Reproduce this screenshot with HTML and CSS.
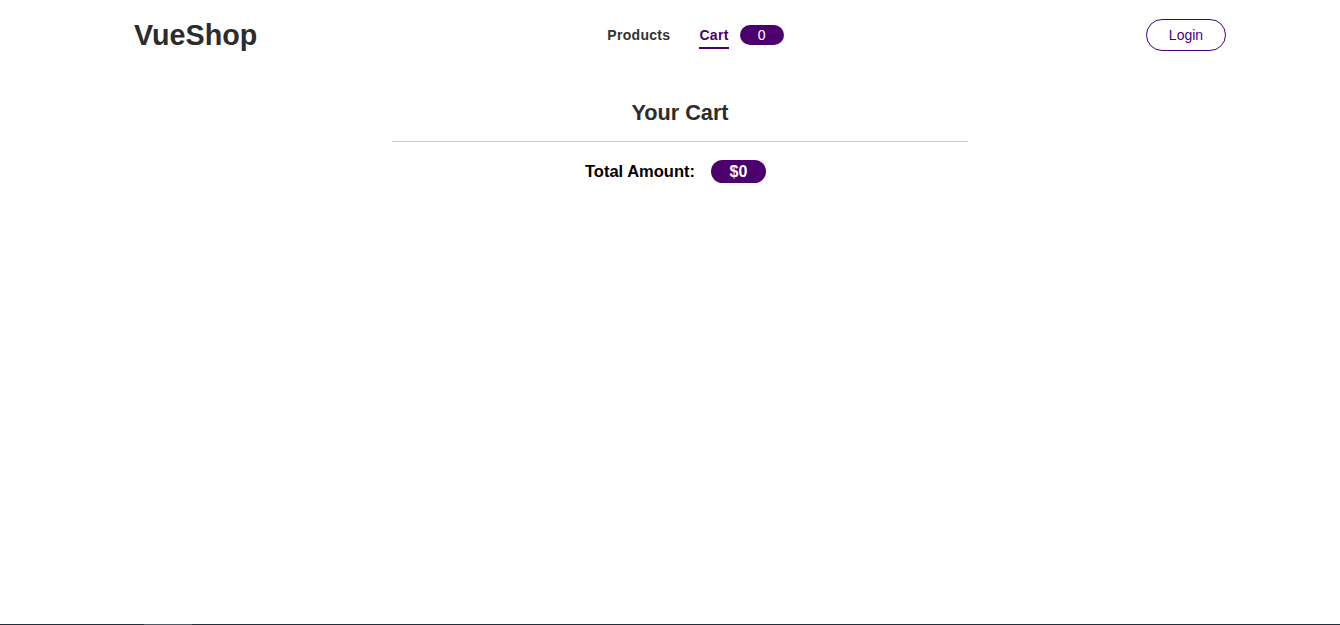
FILE: index.html
```html
<!DOCTYPE html>
<html lang="en">
<head>
<meta charset="utf-8">
<title>VueShop</title>
<link rel="stylesheet" href="styles.css">
</head>
<body>
<div class="page">
  <header class="header">
    <div class="logo">VueShop</div>
    <nav class="nav">
      <a class="nav-link">Products</a>
      <a class="nav-link active">Cart</a>
      <span class="badge">0</span>
    </nav>
    <button class="login">Login</button>
  </header>
  <main class="cart">
    <h2 class="cart-title">Your Cart</h2>
    <hr class="divider">
    <div class="total">
      <span class="total-label">Total Amount:</span>
      <span class="total-badge">$0</span>
    </div>
  </main>
  <footer class="footer"><span class="footer-mark"></span></footer>
</div>
</body>
</html>
```
FILE: styles.css
```css
html, body {
  margin: 0;
  padding: 0;
  background: #fff;
  font-family: "Liberation Sans", Arial, sans-serif;
}
.page {
  height: 625px;
  display: flex;
  flex-direction: column;
  padding-left: 20px;
  box-sizing: border-box;
  overflow: hidden;
}
.header {
  width: 1092px;
  margin: 0 auto;
  height: 70px;
  display: flex;
  align-items: center;
  justify-content: space-between;
}
.logo {
  font-size: 28.7px;
  font-weight: bold;
  color: #2c2c2c;
  width: 200px;
}
.nav {
  display: flex;
  align-items: center;
  margin-left: 56px;
}
.nav-link {
  font-size: 14px;
  font-weight: bold;
  letter-spacing: 0.3px;
  color: #333;
  margin-right: 29px;
  padding: 6px 0 4px;
  border-bottom: 2px solid transparent;
  line-height: 15px;
}
.nav-link.active {
  color: #4b0066;
  border-bottom-color: #4b0066;
  margin-right: 11px;
}
.badge {
  display: inline-flex;
  align-items: center;
  justify-content: center;
  width: 44px;
  height: 20px;
  border-radius: 10px;
  background: #4b006e;
  color: #fff;
  font-size: 14px;
}
.login {
  width: 80px;
  height: 32px;
  border: 1px solid #4b0082;
  border-radius: 16px;
  background: #fff;
  color: #4b0082;
  font-family: "Liberation Sans", Arial, sans-serif;
  font-size: 14px;
  padding: 0;
  margin-left: 145px;
}
.cart {
  width: 576px;
  margin: 0 auto;
  flex: 1;
  display: flex;
  flex-direction: column;
  align-items: center;
}
.cart-title {
  margin: 31px 0 0;
  font-size: 21.7px;
  font-weight: bold;
  color: #2c2c2c;
  line-height: 24px;
}
.divider {
  width: 100%;
  border: 0;
  border-top: 1px solid #ccc;
  margin: 16px 0 0;
}
.total {
  display: flex;
  align-items: center;
  margin-top: 18px;
  padding-right: 9px;
}
.total-label {
  font-size: 16.5px;
  font-weight: bold;
  color: #000;
  margin-right: 16px;
}
.total-badge {
  display: inline-flex;
  align-items: center;
  justify-content: center;
  width: 55px;
  height: 23px;
  border-radius: 12px;
  background: #4b006e;
  color: #fff;
  font-size: 16px;
  font-weight: bold;
}
.footer {
  height: 1px;
  background: #1f2f3b;
  margin-left: -20px;
  position: relative;
}
.footer-mark {
  position: absolute;
  left: 144px;
  top: 0;
  width: 48px;
  height: 1px;
  background: #4a5a66;
}
```
